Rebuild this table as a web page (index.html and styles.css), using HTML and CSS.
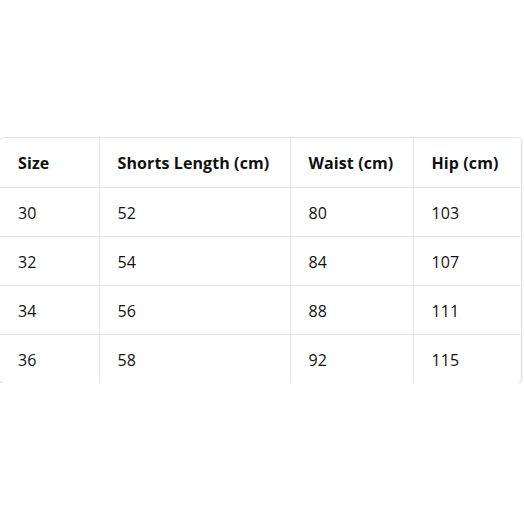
FILE: index.html
```html
<!DOCTYPE html>
<html>
<head>
<meta charset="utf-8">
<link rel="stylesheet" href="styles.css">
</head>
<body>
<div class="page">
  <div class="card">
    <table class="sizes">
      <thead>
        <tr><th class="c1">Size</th><th class="c2">Shorts Length (cm)</th><th class="c3">Waist (cm)</th><th class="c4">Hip (cm)</th></tr>
      </thead>
      <tbody>
        <tr><td>30</td><td>52</td><td>80</td><td>103</td></tr>
        <tr><td>32</td><td>54</td><td>84</td><td>107</td></tr>
        <tr><td>34</td><td>56</td><td>88</td><td>111</td></tr>
        <tr><td>36</td><td>58</td><td>92</td><td>115</td></tr>
      </tbody>
    </table>
  </div>
</div>
</body>
</html>
```

FILE: styles.css
```css
html, body { margin: 0; padding: 0; background: #fff; }
body { font-family: "Open Sans", "Noto Sans", sans-serif; color: #111; }
.page { padding-top: 138px; }
.card {
  width: 521px;
  border-radius: 4px;
  box-shadow: 0 1px 3px rgba(0,0,0,0.14), 0 0 0 1px #ebebeb;
  overflow: hidden;
  background: #fff;
}
.sizes { border-collapse: collapse; width: 521px; table-layout: fixed; }
.sizes th, .sizes td {
  height: 49px;
  padding: 2px 0 0 18px;
  text-align: left;
  font-size: 16px;
  letter-spacing: 0.1px;
  border-bottom: 1px solid #e6e6e6;
  border-right: 1px solid #e6e6e6;
  box-sizing: border-box;
}
.sizes th { font-weight: 700; }
.sizes td { font-weight: 400; }
.sizes tbody tr:last-child td { border-bottom: none; }
.c1 { width: 99px; }
.c2 { width: 191px; }
.c3 { width: 123px; }
.c4 { width: 108px; }
```
